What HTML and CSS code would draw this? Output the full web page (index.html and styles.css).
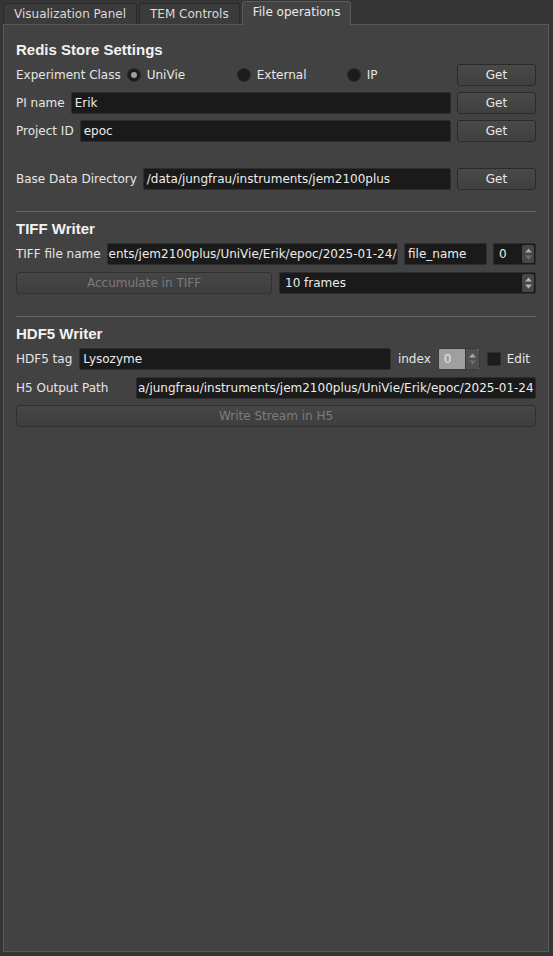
FILE: index.html
```html
<!DOCTYPE html>
<html>
<head>
<meta charset="utf-8">
<link rel="stylesheet" href="styles.css">
</head>
<body>
<div class="tabbar">
  <div class="tab">Visualization Panel</div>
  <div class="tab">TEM Controls</div>
  <div class="tab active">File operations</div>
</div>
<div class="pane">
  <div class="heading">Redis Store Settings</div>

  <div class="row r1">
    <span class="label">Experiment Class</span>
    <div class="radios">
      <div class="radio"><span class="dot checked"></span><span>UniVie</span></div>
      <div class="radio"><span class="dot"></span><span>External</span></div>
      <div class="radio"><span class="dot"></span><span>IP</span></div>
    </div>
    <div class="btn get">Get</div>
  </div>

  <div class="row r2">
    <span class="label">PI name</span>
    <div class="field grow">Erik</div>
    <div class="btn get">Get</div>
  </div>

  <div class="row r3">
    <span class="label">Project ID</span>
    <div class="field grow">epoc</div>
    <div class="btn get">Get</div>
  </div>

  <div class="row r4">
    <span class="label">Base Data Directory</span>
    <div class="field grow">/data/jungfrau/instruments/jem2100plus</div>
    <div class="btn get">Get</div>
  </div>

  <div class="sep s1"></div>

  <div class="heading h2">TIFF Writer</div>

  <div class="row r5">
    <span class="label">TIFF file name</span>
    <div class="field grow tight">ents/jem2100plus/UniVie/Erik/epoc/2025-01-24/</div>
    <div class="field fname">file_name</div>
    <div class="spin small">
      <span class="val">0</span>
      <span class="arrows"><svg width="11" height="18" viewBox="0 0 11 18"><path d="M2 7.5 L5.5 3.5 L9 7.5 Z" fill="#a9a9a9"/><path d="M2 10.5 L5.5 14.5 L9 10.5 Z" fill="#6e6e6e"/></svg></span>
    </div>
  </div>

  <div class="row r6">
    <div class="btn disabled half">Accumulate in TIFF</div>
    <div class="spin half">
      <span class="val">10 frames</span>
      <span class="arrows"><svg width="11" height="18" viewBox="0 0 11 18"><path d="M2 7.5 L5.5 3.5 L9 7.5 Z" fill="#b4b4b4"/><path d="M2 10.5 L5.5 14.5 L9 10.5 Z" fill="#b4b4b4"/></svg></span>
    </div>
  </div>

  <div class="sep s2"></div>

  <div class="heading h3">HDF5 Writer</div>

  <div class="row r7">
    <span class="label">HDF5 tag</span>
    <div class="field grow">Lysozyme</div>
    <span class="label">index</span>
    <div class="spin idx">
      <span class="val">0</span>
      <span class="arrows"><svg width="11" height="18" viewBox="0 0 11 18"><path d="M2 7.5 L5.5 3.5 L9 7.5 Z" fill="#a9a9a9"/><path d="M2 10.5 L5.5 14.5 L9 10.5 Z" fill="#6e6e6e"/></svg></span>
    </div>
    <div class="check"><span class="box"></span><span>Edit</span></div>
  </div>

  <div class="row r8">
    <span class="label lbl-h5">H5 Output Path</span>
    <div class="field grow tight">a/jungfrau/instruments/jem2100plus/UniVie/Erik/epoc/2025-01-24</div>
  </div>

  <div class="row r9">
    <div class="btn disabled grow">Write Stream in H5</div>
  </div>
</div>
</body>
</html>
```

FILE: styles.css
```css
html, body {
  margin: 0;
  padding: 0;
}
body {
  background: #353535;
  font-family: "DejaVu Sans", sans-serif;
  font-size: 12px;
  color: #e6e6e6;
  width: 553px;
  height: 956px;
  overflow: hidden;
}

.tabbar {
  display: flex;
  align-items: flex-end;
  gap: 2px;
  height: 24px;
  padding-left: 3px;
  position: relative;
  z-index: 1;
}
.tab {
  height: 21px;
  box-sizing: border-box;
  padding: 0 10px;
  border: 1px solid #2a2a2a;
  border-bottom: none;
  border-radius: 3px 3px 0 0;
  background: #3b3b3b;
  line-height: 20px;
  color: #dadada;
  white-space: nowrap;
}
.tab.active {
  height: 24px;
  margin-bottom: -1px;
  background: #434343;
  border-color: #5a5a5a;
  color: #e8e8e8;
}

.pane {
  margin-left: 3px;
  width: 546px;
  height: 928px;
  box-sizing: border-box;
  border: 1px solid #585858;
  background: #424242;
  padding: 16px 12px 0 12px;
  display: flex;
  flex-direction: column;
}

.heading {
  font-family: "Liberation Sans", Arial, sans-serif;
  font-weight: bold;
  font-size: 15px;
  line-height: 18px;
  height: 18px;
  color: #f2f2f2;
}
.h2, .h3 { margin-top: 8px; }

.row {
  display: flex;
  align-items: center;
  height: 22px;
  gap: 6px;
}
.r1 { margin-top: 5px; }
.r2, .r3 { margin-top: 6px; }
.r4 { margin-top: 26px; }
.r5 { margin-top: 5px; }
.r6 { margin-top: 7px; gap: 7px; }
.r7 { margin-top: 5px; gap: 7px; }
.r8 { margin-top: 7px; }
.r9 { margin-top: 6px; }

.label {
  white-space: nowrap;
  flex: none;
}
.lbl-h5 { width: 114px; }

.sep {
  height: 1px;
  background: #676767;
  flex: none;
}
.s1 { margin-top: 21px; }
.s2 { margin-top: 22px; }

.field {
  height: 22px;
  box-sizing: border-box;
  background: #1a1a1a;
  border: 1px solid #2d2d2d;
  border-radius: 2px;
  padding: 0 3px;
  line-height: 20px;
  white-space: nowrap;
  overflow: hidden;
  color: #ececec;
}
.field.tight { padding-left: 1px; }
.grow { flex: 1; min-width: 0; }
.fname { width: 83px; flex: none; }

.btn {
  height: 22px;
  box-sizing: border-box;
  border: 1px solid #2b2b2b;
  border-radius: 3px;
  background: linear-gradient(#494949, #3f3f3f);
  text-align: center;
  line-height: 20px;
  color: #e8e8e8;
  white-space: nowrap;
}
.get { width: 79px; flex: none; }
.btn.disabled {
  color: #7c7c7c;
  background: linear-gradient(#464646, #3e3e3e);
  border-color: #303030;
}
.half { flex: 1; min-width: 0; }

.radios {
  display: grid;
  grid-template-columns: 110px 110px 1fr;
  flex: 1;
}
.radio {
  display: flex;
  align-items: center;
  gap: 6px;
}
.dot {
  width: 14px;
  height: 14px;
  box-sizing: border-box;
  border-radius: 50%;
  background: #1c1c1c;
  border: 1px solid #2a2a2a;
  display: flex;
  align-items: center;
  justify-content: center;
}
.dot.checked::after {
  content: "";
  width: 6px;
  height: 6px;
  border-radius: 50%;
  background: #9e9e9e;
}

.spin {
  display: flex;
  align-items: center;
  height: 22px;
  box-sizing: border-box;
  background: #1a1a1a;
  border: 1px solid #2d2d2d;
  border-radius: 2px;
  padding-right: 1px;
  color: #ececec;
}
.spin .val {
  flex: 1;
  padding-left: 5px;
  white-space: nowrap;
  overflow: hidden;
}
.spin .arrows {
  width: 12px;
  height: 18px;
  display: flex;
  justify-content: center;
  align-items: center;
  background: #474747;
  border-radius: 2px;
}
.spin.small { width: 43px; flex: none; }
.spin.idx {
  width: 42px;
  flex: none;
  background: #9f9f9f;
  border-color: #3a3a3a;
  padding-right: 0;
}
.spin.idx .val { color: #e6e6e6; }
.spin.idx .arrows {
  height: 20px;
  width: 13px;
  background: #4f4f4f;
  border-left: 1px solid #3a3a3a;
  border-radius: 0 2px 2px 0;
}

.check {
  display: flex;
  align-items: center;
  gap: 6px;
  margin-right: 6px;
  flex: none;
}
.check .box {
  width: 14px;
  height: 14px;
  box-sizing: border-box;
  background: #1c1c1c;
  border: 1px solid #2f2f2f;
  border-radius: 1px;
}
```
